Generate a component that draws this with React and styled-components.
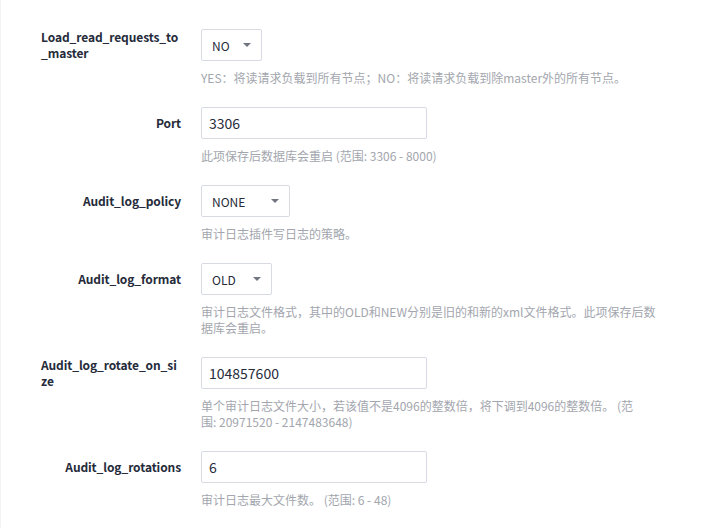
import React from "react";
import styled, { createGlobalStyle } from "styled-components";

const Global = createGlobalStyle`
  html, body {
    margin: 0;
    padding: 0;
    background: #ffffff;
  }
  body {
    font-family: "Noto Sans CJK SC", "Noto Sans", sans-serif;
    color: #252b3a;
  }
`;

const Form = styled.div`
  box-sizing: border-box;
  min-height: 528px;
  padding-top: 29px;
  border-left: 1px solid #f3f4f6;
`;

const Row = styled.div`
  display: grid;
  grid-template-columns: 180px 1fr;
  column-gap: 20px;
  margin-bottom: 21px;
`;

const LabelCell = styled.div`
  height: 32px;
  display: flex;
  align-items: center;
  justify-content: flex-end;
`;

const Label = styled.label`
  max-width: 140px;
  font-size: 12px;
  font-weight: 700;
  line-height: 16px;
  letter-spacing: -0.1px;
  color: #252b3a;
  word-break: break-all;
  text-align: left;
`;

const Field = styled.div`
  display: flex;
  flex-direction: column;
  align-items: flex-start;
`;

const Help = styled.div`
  margin-top: 9px;
  max-width: 458px;
  font-size: 12px;
  line-height: 16px;
  color: #a3a6ae;
  white-space: pre-line;
`;

const SelectBox = styled.div`
  box-sizing: border-box;
  width: ${(p) => p.$w}px;
  height: 32px;
  padding: 0 10px;
  border: 1px solid #d7dae2;
  border-radius: 2px;
  display: flex;
  align-items: center;
  justify-content: space-between;
  font-size: 12px;
  color: #252b3a;
  background: #fff;
`;

const Caret = styled.span`
  width: 0;
  height: 0;
  border-left: 4px solid transparent;
  border-right: 4px solid transparent;
  border-top: 4px solid #71757f;
`;

const TextInput = styled.input`
  box-sizing: border-box;
  width: 226px;
  height: 32px;
  padding: 0 7px;
  border: 1px solid #d7dae2;
  border-radius: 2px;
  font-family: inherit;
  font-size: 14px;
  color: #252b3a;
  background: #fff;
  outline: none;
`;

const Select = ({ value, width }) => (
  <SelectBox $w={width}>
    <span>{value}</span>
    <Caret />
  </SelectBox>
);

const rows = [
  {
    label: "Load_read_requests_to_master",
    type: "select",
    value: "NO",
    width: 61,
    help: "YES：将读请求负载到所有节点；NO：将读请求负载到除master外的所有节点。",
  },
  {
    label: "Port",
    type: "input",
    value: "3306",
    help: "此项保存后数据库会重启 (范围: 3306 - 8000)",
  },
  {
    label: "Audit_log_policy",
    type: "select",
    value: "NONE",
    width: 89,
    help: "审计日志插件写日志的策略。",
  },
  {
    label: "Audit_log_format",
    type: "select",
    value: "OLD",
    width: 71,
    help: "审计日志文件格式，其中的OLD和NEW分别是旧的和新的xml文件格式。此项保存后数据库会重启。",
  },
  {
    label: "Audit_log_rotate_on_size",
    type: "input",
    value: "104857600",
    help: "单个审计日志文件大小，若该值不是4096的整数倍，将下调到4096的整数倍。 (范\n围: 20971520 - 2147483648)",
  },
  {
    label: "Audit_log_rotations",
    type: "input",
    value: "6",
    help: "审计日志最大文件数。 (范围: 6 - 48)",
  },
];

export default function App() {
  return (
    <>
      <Global />
      <Form>
        {rows.map((r) => (
          <Row key={r.label}>
            <LabelCell>
              <Label>{r.label}</Label>
            </LabelCell>
            <Field>
              {r.type === "select" ? (
                <Select value={r.value} width={r.width} />
              ) : (
                <TextInput defaultValue={r.value} />
              )}
              <Help>{r.help}</Help>
            </Field>
          </Row>
        ))}
      </Form>
    </>
  );
}
